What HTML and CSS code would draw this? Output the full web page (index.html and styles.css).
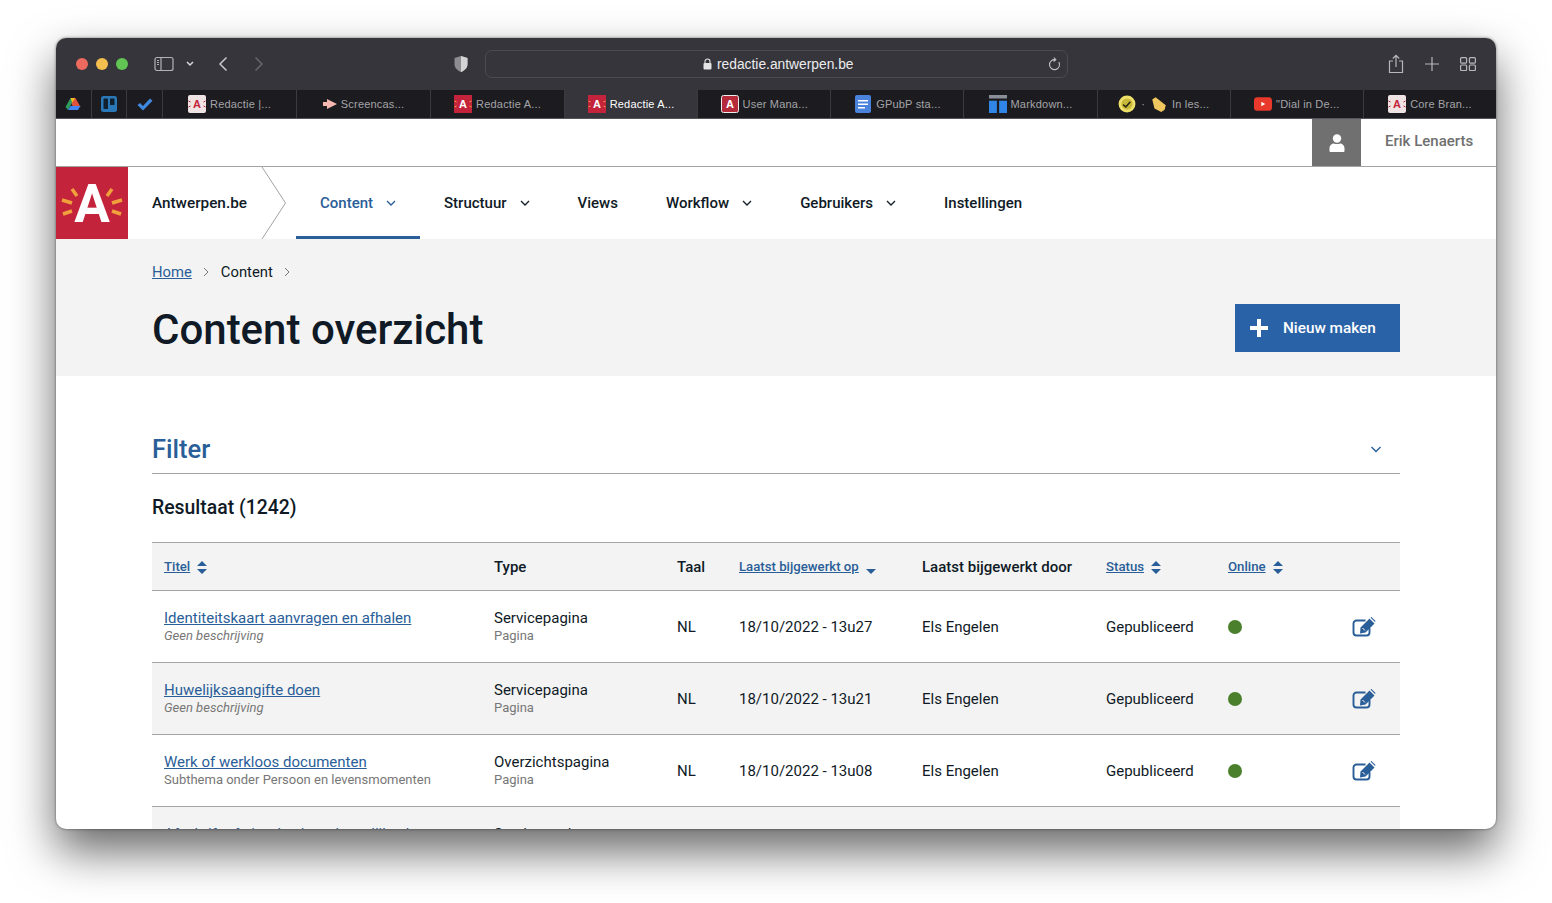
FILE: index.html
```html
<!DOCTYPE html>
<html lang="nl">

<head>
    <meta charset="UTF-8">
    <title>Content overzicht</title>
    <link rel="stylesheet" href="styles.css">
</head>

<body>
    <div class="venster">
        <div class="titelbalk">
            <div class="lichten"><span class="rood"></span><span class="geel"></span><span class="groen"></span></div>
            <svg class="zijbalk" width="20" height="16" viewBox="0 0 20 16" fill="none" stroke="#b4b4b8" stroke-width="1.2"><rect x="1" y="1.5" width="18" height="13" rx="2"/><path d="M7 1.5v13M3 4.5h2M3 6.5h2M3 8.5h2"/></svg>
            <svg class="klein-pijl" width="8" height="6" viewBox="0 0 8 6" fill="none" stroke="#d8d8dc" stroke-width="1.5"><path d="M1 1l3 3 3-3"/></svg>
            <svg class="terug" width="10" height="16" viewBox="0 0 10 16" fill="none" stroke="#c8c8cc" stroke-width="1.5"><path d="M8.5 1.5L2 8l6.500 6.500"/></svg>
            <svg class="vooruit" width="10" height="16" viewBox="0 0 10 16" fill="none" stroke="#66666b" stroke-width="1.5"><path d="M1.500 1.500L8 8l-6.500 6.500"/></svg>
            <svg class="schild" width="16" height="18" viewBox="0 0 16 18"><path d="M8 1l6.500 2v6c0 4-3 6.500-6.500 8-3.500-1.500-6.500-4-6.500-8V3z" fill="#8c8c91"/><path d="M8 1l6.500 2v6c0 4-3 6.500-6.500 8z" fill="#d4d4d7"/></svg>
            <div class="adresbalk">
                <span class="adres">
                    <svg width="9" height="12" viewBox="0 0 9 12"><rect x="0.500" y="5" width="8" height="6.500" rx="1" fill="#e4e4e6"/><path d="M2 5V3.500a2.500 2.500 0 0 1 5 0V5" fill="none" stroke="#e4e4e6" stroke-width="1.100"/></svg>
                    redactie.antwerpen.be
                </span>
                <svg class="herlaad" width="13" height="14" viewBox="0 0 13 14" fill="none" stroke="#c0c0c4" stroke-width="1.100"><path d="M10.800 5a5 5 0 1 1-3.300-2.300M5.800 0.500l2 2.200-2.200 1.800"/></svg>
            </div>
            <div class="acties">
                <svg width="16" height="20" viewBox="0 0 16 20" fill="none" stroke="#b8b8bc" stroke-width="1.200"><path d="M5 7H1.500v11.500h13V7H11M8 13V1.500M4.800 4.500L8 1.300l3.200 3.200"/></svg>
                <svg width="14" height="14" viewBox="0 0 14 14" fill="none" stroke="#b8b8bc" stroke-width="1.200"><path d="M7 0v14M0 7h14"/></svg>
                <svg width="16" height="14" viewBox="0 0 16 14" fill="none" stroke="#b8b8bc" stroke-width="1.200"><rect x="0.600" y="0.600" width="6" height="5.500" rx="1"/><rect x="9.400" y="0.600" width="6" height="5.500" rx="1"/><rect x="0.600" y="8" width="6" height="5.500" rx="1"/><rect x="9.400" y="8" width="6" height="5.500" rx="1"/></svg>
            </div>
        </div>

        <div class="tabbalk">
            <div class="tab-vast">
                <svg width="16" height="14" viewBox="0 0 16 14"><path d="M5.500 1h5l-2.500 5-2.600 0z" fill="#f3b920"/><path d="M5.500 1L0.500 10l2.500 3 4.200-7.500z" fill="#2f9d5c"/><path d="M10.500 1l5 9H8l-1.500-3.500z" fill="#e0533f"/><path d="M3 13l2.500-4h10l-2.500 4z" fill="#4285f4"/></svg>
            </div>
            <div class="tab-vast">
                <svg width="16" height="16" viewBox="0 0 16 16"><rect width="16" height="16" rx="2.500" fill="#2a78b8"/><rect x="2.500" y="2.500" width="4.500" height="10.500" rx="0.600" fill="#10202e"/><rect x="9" y="2.500" width="4.500" height="6.500" rx="0.600" fill="#10202e"/></svg>
            </div>
            <div class="tab-vast">
                <svg width="16" height="13" viewBox="0 0 16 13"><path d="M0.500 7l2.500-2 3 3L13 0.500l2.500 2.200L6 12.500z" fill="#3f8ae0"/></svg>
            </div>
            <div class="tab tab-breed"><svg class="favicon" viewBox="0 0 18 18"><rect width="18" height="18" rx="2" fill="#efe3e3"/><text x="9" y="13" class="favicon-letter licht">A</text><path d="M0.500 6l2 1M0.500 12l2-1M17.500 6l-2 1M17.500 12l-2-1" stroke="#c4243b"/></svg>Redactie |...</div>
            <div class="tab tab-breed"><svg class="favicon klein" viewBox="0 0 14 10"><path d="M0 3h4V0l10 5-10 5V7H0z" fill="#f4b8b0"/></svg>Screencas...</div>
            <div class="tab tab-breed"><svg class="favicon" viewBox="0 0 18 18"><rect width="18" height="18" fill="#c4243b"/><text x="9" y="13" class="favicon-letter">A</text><path d="M0.500 6l2 1M0.500 12l2-1M17.500 6l-2 1M17.500 12l-2-1" stroke="#f0a13c"/></svg>Redactie A...</div>
            <div class="tab actief"><svg class="favicon" viewBox="0 0 18 18"><rect width="18" height="18" fill="#c4243b"/><text x="9" y="13" class="favicon-letter">A</text><path d="M0.500 6l2 1M0.500 12l2-1M17.500 6l-2 1M17.500 12l-2-1" stroke="#f0a13c"/></svg>Redactie A...</div>
            <div class="tab"><svg class="favicon" viewBox="0 0 18 18"><rect x="0.500" y="0.500" width="17" height="17" rx="2" fill="#b52a3a" stroke="#eee"/><text x="9" y="13" class="favicon-letter">A</text></svg>User Mana...</div>
            <div class="tab"><svg class="favicon" viewBox="0 0 16 18"><rect width="16" height="18" rx="2" fill="#4a82dc"/><path d="M3 5h10v1.500H3zM3 8.500h10V10H3zM3 12h7v1.500H3z" fill="#fff"/></svg>GPubP sta...</div>
            <div class="tab"><svg class="favicon" viewBox="0 0 16 16"><path d="M0 0h16v3H0z" fill="#8a8f98"/><path d="M0 5h7v11H0zM9 5h7v11H9z" fill="#2f86e6"/></svg>Markdown...</div>
            <div class="tab"><svg class="favicon" viewBox="0 0 16 16"><circle cx="8" cy="8" r="7.500" fill="#efe06a"/><circle cx="8" cy="8" r="5" fill="#c9b93a"/><path d="M4.500 8.500l2.500 2 4-4.500" fill="none" stroke="#2b2a10" stroke-width="1.400"/></svg><span class="stip">·</span><svg class="favicon" viewBox="0 0 16 16"><path d="M2 4l3-2 9 7-1 4-3 2-6-3z" fill="#f0c75e"/></svg>In les...</div>
            <div class="tab"><svg class="favicon" viewBox="0 0 16 12"><rect width="16" height="12" rx="3" fill="#e8392a"/><path d="M6.500 4l3.500 2-3.500 2z" fill="#fff"/></svg>"Dial in De...</div>
            <div class="tab"><svg class="favicon" viewBox="0 0 18 18"><rect width="18" height="18" rx="2" fill="#efe3e3"/><text x="9" y="13" class="favicon-letter licht">A</text><path d="M0.500 6l2 1M0.500 12l2-1M17.500 6l-2 1M17.500 12l-2-1" stroke="#c4243b"/></svg>Core Bran...</div>
        </div>

        <div class="gebruikerbalk">
            <div class="avatar">
                <svg width="16" height="18" viewBox="0 0 16 18" fill="#fff"><circle cx="8" cy="4.500" r="4.200"/><path d="M0.500 17v-2.500C0.500 11 3 9.500 5 9.500c1 .8 5 .8 6 0 2 0 4.500 1.500 4.500 5V17a1 1 0 0 1-1 1h-13a1 1 0 0 1-1-1z"/></svg>
            </div>
            <div class="gebruiker-naam">Erik Lenaerts</div>
        </div>

        <nav class="hoofdnav">
            <div class="logo">
                <svg width="72" height="72" viewBox="0 0 72 72">
                    <rect width="72" height="72" fill="#c4243b"/>
                    <text x="36" y="55" class="logo-letter">A</text>
                    <path d="M16 22l5 7M56 22l-5 7M6 33l10 3M66 33l-10 3M7 47l9-3M65 47l-9-3" stroke="#f0a13c" stroke-width="3.500"/>
                </svg>
            </div>
            <div class="merk">
                <span>Antwerpen.be</span>
                <svg class="merk-punt" width="26" height="72" viewBox="0 0 26 72" fill="none" stroke="#a3a3a3"><path d="M1 0l23.500 36L1 72"/></svg>
            </div>
            <ul class="nav-lijst">
                <li class="actief"><a href="#">Content<svg class="nav-pijl" viewBox="0 0 10 6"><path d="M1 1l4 4 4-4"/></svg></a></li>
                <li><a href="#">Structuur<svg class="nav-pijl" viewBox="0 0 10 6"><path d="M1 1l4 4 4-4"/></svg></a></li>
                <li><a href="#">Views</a></li>
                <li><a href="#">Workflow<svg class="nav-pijl" viewBox="0 0 10 6"><path d="M1 1l4 4 4-4"/></svg></a></li>
                <li><a href="#">Gebruikers<svg class="nav-pijl" viewBox="0 0 10 6"><path d="M1 1l4 4 4-4"/></svg></a></li>
                <li><a href="#">Instellingen</a></li>
            </ul>
        </nav>

        <section class="kop">
            <div class="kruimels">
                <a href="#">Home</a>
                <svg class="kruimel-pijl" viewBox="0 0 6 10"><path d="M1 1l4 4-4 4"/></svg>
                <span>Content</span>
                <svg class="kruimel-pijl" viewBox="0 0 6 10"><path d="M1 1l4 4-4 4"/></svg>
            </div>
            <div class="kop-rij">
                <h1>Content overzicht</h1>
                <button class="knop-nieuw">
                    <svg width="18" height="18" viewBox="0 0 18 18" fill="#fff"><path d="M7 0h4v7h7v4h-7v7H7v-7H0V7h7z"/></svg>
                    Nieuw maken
                </button>
            </div>
        </section>

        <main class="inhoud">
            <div class="filter">
                <h2>Filter</h2>
                <svg width="10" height="7" viewBox="0 0 10 7" fill="none" stroke="#2a5e98" stroke-width="1.400"><path d="M0.500 1l4.500 4.500L9.500 1"/></svg>
            </div>
            <h3 class="resultaat">Resultaat (1242)</h3>

            <table class="tabel">
                <colgroup>
                    <col class="k-titel"><col class="k-type"><col class="k-taal"><col class="k-datum"><col class="k-door"><col class="k-status"><col class="k-online"><col>
                </colgroup>
                <thead>
                    <tr>
                        <th><a href="#">Titel</a><svg class="sorteer" viewBox="0 0 10 13"><path d="M5 0l5 5H0zM5 13l5-5H0z"/></svg></th>
                        <th>Type</th>
                        <th>Taal</th>
                        <th><a href="#">Laatst bijgewerkt op</a><svg class="sorteer onder" viewBox="0 0 10 5"><path d="M5 5l5-5H0z"/></svg></th>
                        <th>Laatst bijgewerkt door</th>
                        <th><a href="#">Status</a><svg class="sorteer" viewBox="0 0 10 13"><path d="M5 0l5 5H0zM5 13l5-5H0z"/></svg></th>
                        <th><a href="#">Online</a><svg class="sorteer" viewBox="0 0 10 13"><path d="M5 0l5 5H0zM5 13l5-5H0z"/></svg></th>
                        <th></th>
                    </tr>
                </thead>
                <tbody>
                    <tr>
                        <td><a href="#">Identiteitskaart aanvragen en afhalen</a><small class="schuin">Geen beschrijving</small></td>
                        <td>Servicepagina<small>Pagina</small></td>
                        <td>NL</td>
                        <td>18/10/2022 - 13u27</td>
                        <td>Els Engelen</td>
                        <td>Gepubliceerd</td>
                        <td><span class="online"></span></td>
                        <td class="bewerk"><svg viewBox="0 0 24 20" fill="none"><path d="M13.500 3.500H4.500a3 3 0 0 0-3 3v9a3 3 0 0 0 3 3h10a3 3 0 0 0 3-3V11" stroke="#2a5e98" stroke-width="1.900"/><path d="M8.500 10.500L17.500 1.500 22.500 6.500 13.500 15.500 8 16.500zM18.500 0.500l1-.5 4 4-.5 1z" fill="#2a5e98"/><path d="M10.500 11l2.500 2.500" stroke="#fff"/></svg></td>
                    </tr>
                    <tr>
                        <td><a href="#">Huwelijksaangifte doen</a><small class="schuin">Geen beschrijving</small></td>
                        <td>Servicepagina<small>Pagina</small></td>
                        <td>NL</td>
                        <td>18/10/2022 - 13u21</td>
                        <td>Els Engelen</td>
                        <td>Gepubliceerd</td>
                        <td><span class="online"></span></td>
                        <td class="bewerk"><svg viewBox="0 0 24 20" fill="none"><path d="M13.500 3.500H4.500a3 3 0 0 0-3 3v9a3 3 0 0 0 3 3h10a3 3 0 0 0 3-3V11" stroke="#2a5e98" stroke-width="1.900"/><path d="M8.500 10.500L17.500 1.500 22.500 6.500 13.500 15.500 8 16.500zM18.500 0.500l1-.5 4 4-.5 1z" fill="#2a5e98"/><path d="M10.500 11l2.500 2.500" stroke="#fff"/></svg></td>
                    </tr>
                    <tr>
                        <td><a href="#">Werk of werkloos documenten</a><small>Subthema onder Persoon en levensmomenten</small></td>
                        <td>Overzichtspagina<small>Pagina</small></td>
                        <td>NL</td>
                        <td>18/10/2022 - 13u08</td>
                        <td>Els Engelen</td>
                        <td>Gepubliceerd</td>
                        <td><span class="online"></span></td>
                        <td class="bewerk"><svg viewBox="0 0 24 20" fill="none"><path d="M13.500 3.500H4.500a3 3 0 0 0-3 3v9a3 3 0 0 0 3 3h10a3 3 0 0 0 3-3V11" stroke="#2a5e98" stroke-width="1.900"/><path d="M8.500 10.500L17.500 1.500 22.500 6.500 13.500 15.500 8 16.500zM18.500 0.500l1-.5 4 4-.5 1z" fill="#2a5e98"/><path d="M10.500 11l2.500 2.500" stroke="#fff"/></svg></td>
                    </tr>
                    <tr>
                        <td><a href="#">Afschrift of uittreksel van huwelijksakte</a><small class="schuin">Geen beschrijving</small></td>
                        <td>Servicepagina<small>Pagina</small></td>
                        <td>NL</td>
                        <td>18/10/2022 - 13u02</td>
                        <td>Els Engelen</td>
                        <td>Gepubliceerd</td>
                        <td><span class="online"></span></td>
                        <td class="bewerk"></td>
                    </tr>
                </tbody>
            </table>
        </main>
    </div>
</body>

</html>
```

FILE: styles.css
```css
* {
    box-sizing: border-box;
}

body {
    margin: 0;
    height: 903px;
    overflow: hidden;
    background-color: white;
    font-family: Roboto, Arial, sans-serif;
    color: #0f1a26;
    padding: 38px 56px 0;
}

/* browser venster */
.venster {
    width: 1440px;
    height: 791px;
    background-color: white;
    border-radius: 10px;
    overflow: hidden;
    box-shadow: 0 22px 46px rgba(0, 0, 0, 0.6), 0 0 3px rgba(0, 0, 0, 0.5);
}

.titelbalk {
    height: 52px;
    background-color: #35353b;
    display: flex;
    align-items: center;
    padding: 0 20px;
}

.lichten {
    display: flex;
    gap: 8px;
    width: 78px;
}

.lichten span {
    width: 12px;
    height: 12px;
    border-radius: 50%;
}

.rood {
    background-color: #ec6a5e;
}

.geel {
    background-color: #f4bf4f;
}

.groen {
    background-color: #61c554;
}

.klein-pijl {
    margin-left: 12px;
}

.terug {
    margin-left: 24px;
}

.vooruit {
    margin-left: 26px;
}

.schild {
    margin-left: 189px;
}

.adresbalk {
    margin-left: 16px;
    width: 583px;
    height: 28px;
    border: 1px solid #4b4b51;
    border-radius: 7px;
    display: flex;
    align-items: center;
    padding-right: 6px;
}

.adres {
    margin-left: 217px;
    color: #ececee;
    font-family: "Liberation Sans", Arial, sans-serif;
    font-size: 13.800px;
    display: flex;
    align-items: center;
    gap: 5px;
}

.herlaad {
    margin-left: auto;
}

.acties {
    margin-left: auto;
    display: flex;
    align-items: center;
    gap: 21px;
}

.tabbalk {
    height: 29px;
    background-color: #1c1c20;
    border-bottom: 1px solid #55555a;
    display: flex;
}

.tab-vast {
    height: 28px;
    width: 35.700px;
    flex: none;
    border-right: 1px solid #3a3a3f;
    display: flex;
    align-items: center;
    justify-content: center;
}

.tab {
    flex: 1 1 0;
    height: 28px;
    border-right: 1px solid #3a3a3f;
    display: flex;
    align-items: center;
    justify-content: center;
    gap: 4px;
    color: #a4a4a8;
    font-family: "Liberation Sans", Arial, sans-serif;
    font-size: 11px;
    letter-spacing: 0.200px;
    white-space: nowrap;
}

.tab-breed {
    flex: none;
    width: 134px;
}

.tab:last-child {
    border-right: none;
}

.tab.actief {
    background-color: #35353b;
    color: white;
}

.favicon {
    width: 18px;
    height: 18px;
    flex: none;
}

.favicon.klein {
    width: 14px;
}

.favicon-letter {
    font-family: "Liberation Sans", Arial, sans-serif;
    font-weight: bold;
    font-size: 11px;
    letter-spacing: 0;
    text-anchor: middle;
    fill: white;
}

.favicon-letter.licht {
    fill: #c4243b;
}

.stip {
    margin: 0 1px;
}

/* gebruiker */
.gebruikerbalk {
    height: 48px;
    border-bottom: 1px solid #a3a3a3;
    display: flex;
    justify-content: flex-end;
}

.avatar {
    width: 49px;
    background-color: #707070;
    display: flex;
    align-items: center;
    justify-content: center;
}

.gebruiker-naam {
    width: 135px;
    padding-left: 24px;
    line-height: 45px;
    font-size: 15px;
    font-weight: 500;
    color: #6f6f6f;
}

/* hoofdnavigatie */
.hoofdnav {
    height: 72px;
    display: flex;
}

.logo {
    width: 72px;
    height: 72px;
}

.logo svg {
    display: block;
}

.logo-letter {
    font-family: Roboto, Arial, sans-serif;
    font-weight: 700;
    font-size: 53px;
    text-anchor: middle;
    fill: white;
}

.merk {
    position: relative;
    width: 168px;
    padding-left: 24px;
    line-height: 72px;
    font-size: 15.300px;
    font-weight: 500;
}

.merk-punt {
    position: absolute;
    top: 0;
    left: 133px;
}

.nav-lijst {
    list-style-type: none;
    margin: 0;
    padding: 0;
    display: flex;
}

.nav-lijst a {
    display: flex;
    align-items: center;
    gap: 13px;
    height: 72px;
    padding: 0 24px 1px;
    color: #0f1a26;
    text-decoration: none;
    font-size: 15px;
    font-weight: 500;
}

.nav-lijst .actief a {
    color: #2a5e98;
    border-bottom: 3px solid #2a5e98;
    padding-bottom: 0;
    padding-top: 2px;
}

.nav-pijl {
    width: 10px;
    height: 6px;
    fill: none;
    stroke: currentColor;
    stroke-width: 1.300;
}

/* paginakop */
.kop {
    height: 137px;
    background-color: #f3f3f3;
    padding: 22px 96px 0;
}

.kruimels {
    display: flex;
    align-items: center;
    height: 22px;
    font-size: 14.800px;
}

.kruimels a {
    color: #2a5e98;
}

.kruimel-pijl {
    width: 6px;
    height: 10px;
    margin: 0 11.500px;
    fill: none;
    stroke: #777;
}

.kop-rij {
    display: flex;
    justify-content: space-between;
    align-items: center;
    margin-top: 21px;
}

h1 {
    margin: 0;
    height: 48px;
    padding-top: 2px;
    font-size: 42px;
    line-height: 48px;
    font-weight: 500;
}

.knop-nieuw {
    width: 165px;
    height: 48px;
    background-color: #2a62a8;
    color: white;
    border: none;
    display: flex;
    align-items: center;
    gap: 15px;
    padding: 0 0 0 15px;
    font-family: inherit;
    font-size: 15.300px;
    font-weight: 500;
}

/* inhoud */
.inhoud {
    padding: 49px 96px 0;
}

.filter {
    height: 49px;
    border-bottom: 1px solid #a3a3a3;
    display: flex;
    justify-content: space-between;
    align-items: center;
    padding-right: 19px;
}

.filter h2 {
    margin: 0;
    font-size: 25.500px;
    font-weight: 500;
    color: #2a5e98;
}

.resultaat {
    margin: 20px 0 20px;
    font-size: 19.400px;
    line-height: 28px;
    font-weight: 500;
}

.tabel {
    width: 1248px;
    table-layout: fixed;
    border-collapse: collapse;
    border-top: 1px solid #a3a3a3;
    font-size: 15px;
}

.k-titel {
    width: 330px;
}

.k-type {
    width: 183px;
}

.k-taal {
    width: 62px;
}

.k-datum {
    width: 183px;
}

.k-door {
    width: 184px;
}

.k-status {
    width: 122px;
}

.k-online {
    width: 124px;
}

.tabel th {
    height: 48px;
    padding: 0 12px;
    text-align: left;
    font-weight: 500;
    background-color: #f3f3f3;
    border-bottom: 1px solid #a3a3a3;
    white-space: nowrap;
}

.tabel th a {
    font-size: 13.200px;
    color: #2a5e98;
    position: relative;
    top: -1px;
}

.sorteer {
    width: 10px;
    height: 13px;
    margin-left: 7px;
    vertical-align: -2px;
    fill: #2a5e98;
}

.sorteer.onder {
    height: 5px;
    vertical-align: -2px;
}

.tabel td {
    height: 72px;
    padding: 0 12px;
    border-bottom: 1px solid #a3a3a3;
    white-space: nowrap;
    line-height: 18px;
}

.tabel tbody tr:nth-child(even) td {
    background-color: #f3f3f3;
}

.tabel td a {
    color: #2a5e98;
}

.tabel small {
    display: block;
    font-size: 13px;
    color: #777;
}

.tabel small.schuin {
    font-style: italic;
}

.online {
    display: block;
    width: 14px;
    height: 14px;
    border-radius: 50%;
    background-color: #4a7f2b;
}

.bewerk svg {
    display: block;
    width: 24px;
    height: 20px;
}
```
